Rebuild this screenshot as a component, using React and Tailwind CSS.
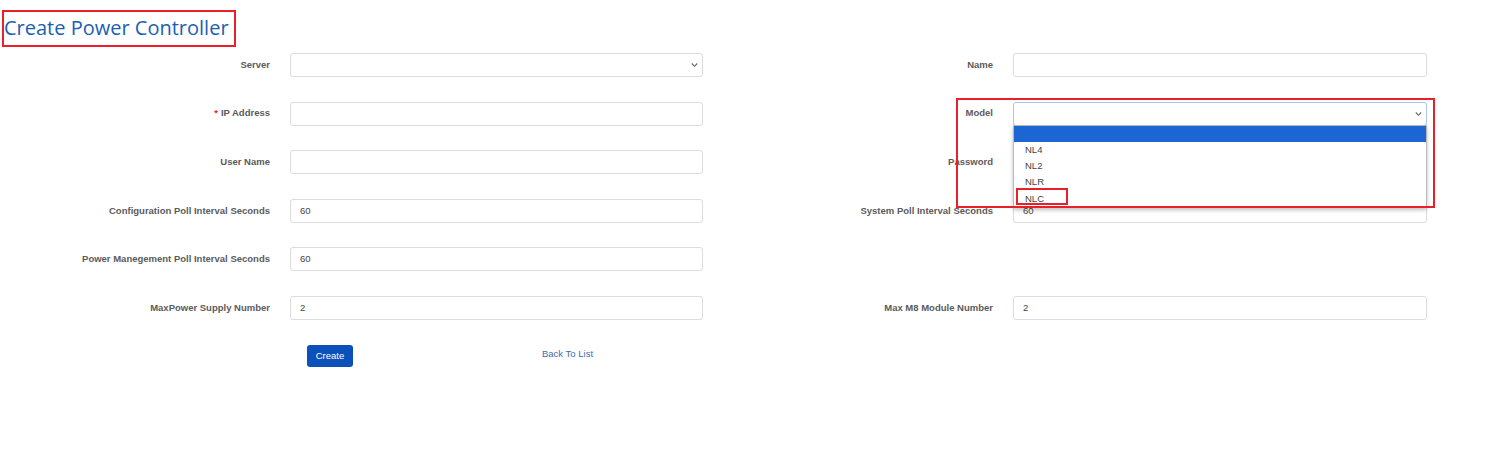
import React from 'react';

const Chevron = () => (
    <svg className="absolute right-[4px] top-1/2 -translate-y-1/2" width="7" height="5" viewBox="0 0 7 5" fill="none">
        <polyline points="0.8,1 3.5,3.8 6.2,1" stroke="#666" strokeWidth="1.1" />
    </svg>
);

const Label = ({ children, required }) => (
    <div className="flex items-center justify-end h-[24px] text-[9.5px] font-bold text-[#5b5b5b] whitespace-nowrap">
        {required && <span className="text-[#e0262b] mr-[3px]">*</span>}
        {children}
    </div>
);

const TextBox = ({ value = '' }) => (
    <div className="h-[24px] border border-[#dcdcdc] rounded-[3px] bg-white flex items-center pl-[9px] text-[9.5px] text-[#444]">
        {value}
    </div>
);

const SelectBox = ({ focused }) => (
    <div className={`relative h-[24px] border rounded-[3px] bg-white ${focused ? 'border-[#a9c6ee]' : 'border-[#dcdcdc]'}`}>
        <Chevron />
    </div>
);

const App = () => {
    const models = ['NL4', 'NL2', 'NLR', 'NLC'];

    return (
        <div className="relative w-[1487px] h-[455px] bg-white overflow-hidden" style={{ fontFamily: '"Liberation Sans", Arial, sans-serif' }}>

            {/* Page title */}
            <div className="ml-[2px] mt-[10px] w-[234px] h-[37px] border-2 border-[#e8202a] flex items-center">
                <h1 className="text-[20px] leading-none text-[#1b5fb0] whitespace-nowrap -mt-[2px]" style={{ fontFamily: '"Open Sans", sans-serif' }}>
                    Create Power Controller
                </h1>
            </div>

            {/* Form */}
            <div className="mt-[6px] grid grid-cols-[270px_413px_270px_414px] gap-x-[20px] gap-y-[24.6px]">
                <Label>Server</Label>
                <SelectBox />
                <Label>Name</Label>
                <TextBox />

                <Label required>IP Address</Label>
                <TextBox />
                <Label>Model</Label>
                <div className="relative">
                    <SelectBox focused />
                    <div className="absolute left-0 top-[23px] w-full z-10 bg-white border border-[#b9b9b9] shadow-[0_2px_4px_rgba(0,0,0,0.25)] text-[9.5px] text-[#444]">
                        <div className="h-[16.5px] bg-[#1b66d2]" />
                        {models.map((m) => (
                            <div key={m} className="h-[16.2px] flex items-center pl-[11px]">{m}</div>
                        ))}
                    </div>
                </div>

                <Label>User Name</Label>
                <TextBox />
                <Label>Password</Label>
                <TextBox />

                <Label>Configuration Poll Interval Seconds</Label>
                <TextBox value="60" />
                <Label>System Poll Interval Seconds</Label>
                <TextBox value="60" />

                <Label>Power Manegement Poll Interval Seconds</Label>
                <TextBox value="60" />
                <div />
                <div />

                <Label>MaxPower Supply Number</Label>
                <TextBox value="2" />
                <Label>Max M8 Module Number</Label>
                <TextBox value="2" />
            </div>

            {/* Actions */}
            <div className="mt-[25px] ml-[307px] flex items-start">
                <button className="w-[46px] h-[22px] rounded-[3px] bg-[#0c50ba] text-white text-[9.5px]">Create</button>
                <a href="#" className="ml-[189px] mt-[2px] text-[9.5px] text-[#3a6db0]">Back To List</a>
            </div>

            {/* Annotation boxes */}
            <div className="absolute left-[956px] top-[98px] w-[479px] h-[110px] border-2 border-[#e8202a] z-20 pointer-events-none" />
            <div className="absolute left-[1016px] top-[188px] w-[52px] h-[17px] border-2 border-[#e8202a] z-20 pointer-events-none" />
        </div>
    );
};

export default App;
